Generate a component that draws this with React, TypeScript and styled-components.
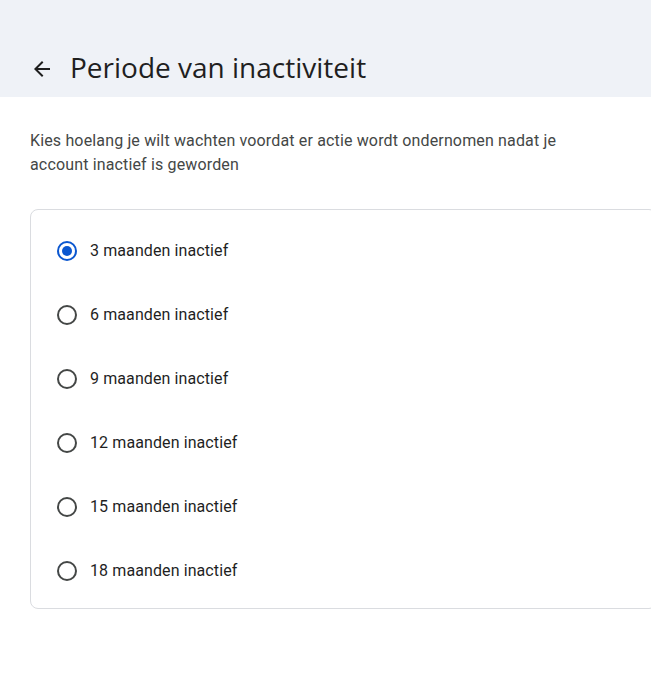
import React from "react";
import styled, { createGlobalStyle } from "styled-components";

const Global = createGlobalStyle`
  html, body { margin: 0; padding: 0; background: #ffffff; overflow: hidden; }
  body { font-family: Roboto, "Noto Sans", Arial, sans-serif; -webkit-font-smoothing: antialiased; }
`;

const Page = styled.div`
  width: 651px;
  min-height: 673px;
  background: #ffffff;
  overflow: hidden;
`;

const Header = styled.header`
  height: 97px;
  background: #eff2f7;
  box-sizing: border-box;
  display: flex;
  align-items: flex-end;
  padding: 0 0 12px 30px;
`;

const BackButton = styled.button`
  width: 24px;
  height: 24px;
  padding: 0;
  border: none;
  background: transparent;
  display: flex;
  align-items: center;
  justify-content: center;
  margin-right: 16px;
  margin-bottom: 4px;
  color: #1f1f1f;
  cursor: pointer;
`;

const Title = styled.h1`
  margin: 0;
  font-family: "Open Sans", Roboto, sans-serif;
  font-weight: 400;
  font-size: 28px;
  line-height: 36px;
  color: #1f1f1f;
  letter-spacing: 0;
`;

const Main = styled.main`
  padding: 32px 0 0 30px;
`;

const Description = styled.p`
  margin: 0 0 32px 0;
  max-width: 570px;
  font-size: 16px;
  line-height: 24px;
  letter-spacing: 0.15px;
  color: #444746;
`;

const Card = styled.div`
  box-sizing: border-box;
  width: 627px;
  border: 1px solid #dadce0;
  border-radius: 8px;
  padding: 9px 0 5px 0;
  display: flex;
  flex-direction: column;
`;

const Option = styled.label`
  height: 64px;
  display: flex;
  align-items: center;
  padding-left: 26px;
  cursor: pointer;
`;

const Radio = styled.span<{ $checked: boolean }>`
  box-sizing: border-box;
  width: 20px;
  height: 20px;
  border-radius: 50%;
  border: 2px solid ${(p) => (p.$checked ? "#0b57d0" : "#444746")};
  display: flex;
  align-items: center;
  justify-content: center;
  margin-right: 13px;
  flex-shrink: 0;
  &::after {
    content: "";
    width: 10px;
    height: 10px;
    border-radius: 50%;
    background: #0b57d0;
    display: ${(p) => (p.$checked ? "block" : "none")};
  }
`;

const OptionText = styled.span`
  font-size: 16px;
  line-height: 24px;
  letter-spacing: 0.1px;
  color: #1f1f1f;
`;

const options = [3, 6, 9, 12, 15, 18];

export default function App() {
  return (
    <Page>
      <Global />
      <Header>
        <BackButton aria-label="Terug">
          <svg width="24" height="24" viewBox="0 0 24 24" fill="currentColor">
            <path d="M20 11H7.83l5.59-5.59L12 4l-8 8 8 8 1.41-1.41L7.83 13H20v-2z" />
          </svg>
        </BackButton>
        <Title>Periode van inactiviteit</Title>
      </Header>
      <Main>
        <Description>
          Kies hoelang je wilt wachten voordat er actie wordt ondernomen nadat je account inactief is geworden
        </Description>
        <Card>
          {options.map((m, i) => (
            <Option key={m}>
              <Radio $checked={i === 0} />
              <OptionText>{m} maanden inactief</OptionText>
            </Option>
          ))}
        </Card>
      </Main>
    </Page>
  );
}
